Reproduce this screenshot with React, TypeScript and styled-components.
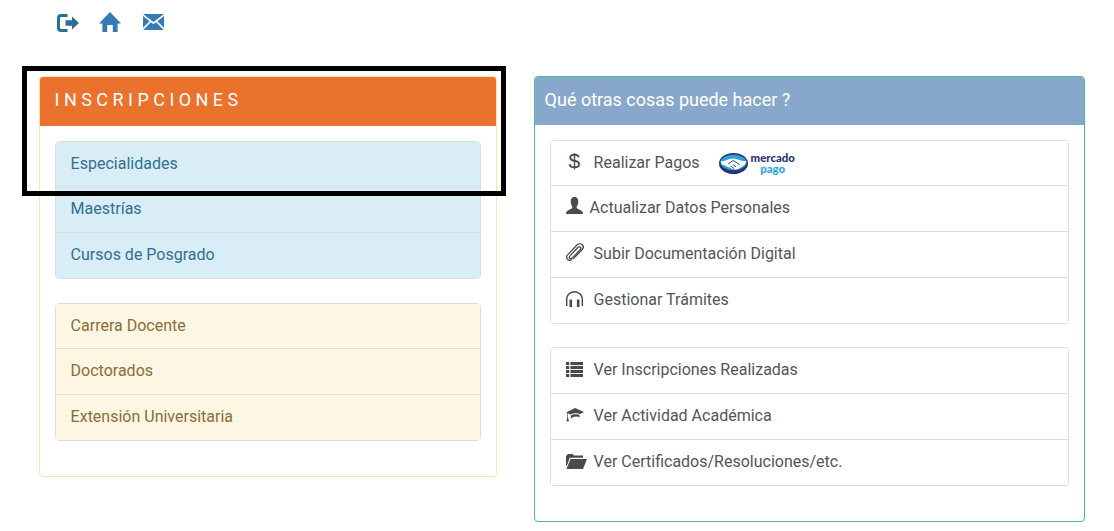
import React from "react";
import styled, { createGlobalStyle } from "styled-components";

const Global = createGlobalStyle`
  html, body { margin: 0; padding: 0; background: #fff; }
  body { font-family: Roboto, "Liberation Sans", sans-serif; font-size: 16px; line-height: 22.857px; color: #333; }
  * { box-sizing: border-box; }
`;

const Page = styled.div`
  position: relative;
  width: 1114px;
  height: 531px;
  overflow: hidden;
`;
const Toolbar = styled.nav`
  display: flex;
  align-items: flex-start;
  height: 76px;
  padding: 12px 0 0 57px;
`;
const ToolLink = styled.a<{ $w: number; $top?: number; $color?: string }>`
  display: block;
  width: ${(p) => p.$w}px;
  margin-top: ${(p) => p.$top ?? 0}px;
  color: ${(p) => p.$color ?? "#337ab7"};
  line-height: 0;
`;
const Columns = styled.div`
  display: flex;
  align-items: flex-start;
  padding-left: 39px;
  gap: 37px;
`;
const Panel = styled.section<{ $w: number; $h: number; $border: string }>`
  width: ${(p) => p.$w}px;
  height: ${(p) => p.$h}px;
  border: 1px solid ${(p) => p.$border};
  border-radius: 4px;
  overflow: hidden;
`;
const Heading = styled.h2<{ $bg: string; $spacing?: number }>`
  margin: 0;
  height: ${(p) => (p.$spacing ? 49 : 48)}px;
  padding: 0 10px 0 ${(p) => (p.$spacing ? 14.6 : 9.6)}px;
  background: ${(p) => p.$bg};
  color: #fff;
  font-size: 18px;
  font-weight: 400;
  line-height: 46px;
  letter-spacing: ${(p) => p.$spacing ?? 0}px;
`;
const Body = styled.div<{ $gap: number }>`
  display: flex;
  flex-direction: column;
  gap: ${(p) => p.$gap}px;
  padding: 14.6px 15px 0;
`;
const List = styled.ul`
  list-style: none;
  margin: 0;
  padding: 0;
  border: 1px solid #ddd;
  border-radius: 4px;
`;
const Item = styled.li<{ $bg: string; $color: string }>`
  display: flex;
  align-items: center;
  height: 45.857px;
  padding: 0 14.6px;
  background: ${(p) => p.$bg};
  color: ${(p) => p.$color};
  border-top: 1px solid #ddd;
  white-space: nowrap;
  &:first-child { border-top: 0; height: 44.857px; }
`;
const IconSlot = styled.span<{ $w: number; $pad?: number; $lift?: number }>`
  display: flex;
  align-items: center;
  flex: none;
  width: ${(p) => p.$w}px;
  padding-left: ${(p) => p.$pad ?? 0}px;
  margin-bottom: ${(p) => p.$lift ?? 0}px;
  color: #4a4a4a;
  line-height: 0;
`;
const Dollar = styled.span`
  font-family: "Liberation Sans", sans-serif;
  font-size: 21px;
  line-height: 20px;
  color: #444;
`;
const Logo = styled.span`
  display: flex;
  align-items: center;
  margin-left: 19px;
  gap: 3px;
`;
const LogoWords = styled.span`
  display: flex;
  flex-direction: column;
  align-items: center;
  font-family: Lato, "Liberation Sans", sans-serif;
  font-weight: 900;
  font-size: 11.4px;
  line-height: 11px;
  color: #2d3277;
`;
const LogoPago = styled.span`
  color: #2aa4e0;
`;
const Highlight = styled.div`
  position: absolute;
  left: 22px;
  top: 66px;
  width: 484px;
  height: 130px;
  border: 5px solid #000;
  pointer-events: none;
`;

const Svg = ({ w, h, vb, d }: { w: number; h: number; vb: string; d: string }) => (
  <svg width={w} height={h} viewBox={vb} fill="currentColor" fillRule="evenodd">
    <path d={d} />
  </svg>
);

const LogOut = () => (
  <Svg w={22} h={18} vb="0 0 22 18" d="M4 0H10.5V3H4.5C3.5 3 3 3.5 3 4.5V13.5C3 14.5 3.5 15 4.5 15H10.5V18H4C1.5 18 0 16.5 0 14V4C0 1.5 1.5 0 4 0ZM8.5 6.2H15V2.5L22 9L15 15.5V11.8H8.5Z" />
);
const Home = () => (
  <Svg w={22} h={20} vb="0 0 22 20" d="M11 0L22 11.5H18.6V20H13.8V13H8.2V20H3.4V11.5H0Z" />
);
const Mail = () => (
  <Svg w={21} h={16} vb="0 0 21 16" d="M0 0H21L10.5 8ZM0 2L6.6 7.2L0 13.8ZM21 2V13.8L14.4 7.2ZM7.9 8.3L10.5 10.3L13.1 8.3L20.8 16H.2Z" />
);
const UserIcon = () => (
  <Svg w={17} h={17} vb="0 0 17 17" d="M8.5 0C11 0 12.3 2 12.3 4.6C12.3 6.8 11.4 8.8 10.6 9.8C10.6 11 11 11.6 12.5 12.2C15 13.2 17 14 17 17H0C0 14 2 13.2 4.5 12.2C6 11.6 6.4 11 6.4 9.8C5.6 8.8 4.7 6.8 4.7 4.6C4.7 2 6 0 8.5 0Z" />
);
const Clip = () => (
  <svg width="18" height="18" viewBox="0 0 18 18" fill="none" stroke="currentColor" strokeWidth="1.3" strokeLinecap="round">
    <path d="M5.5 16.8C3.8 17.8 1.6 17 .9 15.2C.4 14 .8 12.6 1.8 11.6L10.5 2.5C12.3.6 14.8.3 16.3 1.7C17.8 3.2 17.4 5.5 15.6 7.3L7.4 15.6" />
    <path d="M4.2 12.6L11.6 4.8C12.6 3.7 13.8 3.5 14.5 4.2C15.2 4.9 15 6 14 7L6.5 14.8C5.4 15.8 4.2 15.9 3.6 15.2C3 14.6 3.2 13.6 4.2 12.6Z" />
  </svg>
);
const Headphones = () => (
  <svg width="17" height="16" viewBox="0 0 17 16" fill="currentColor">
    <path d="M8.5 0C3.8 0 0 3.6 0 8.3V15H1.4V8.3C1.4 4.4 4.6 1.4 8.5 1.4S15.6 4.4 15.6 8.3V15H17V8.3C17 3.6 13.2 0 8.5 0Z" />
    <rect x="3.5" y="8.5" width="2.6" height="7.5" rx=".5" />
    <rect x="10.9" y="8.5" width="2.6" height="7.5" rx=".5" />
  </svg>
);
const ListIcon = () => (
  <Svg w={17} h={15} vb="0 0 17 15" d="M0 0H3.2V3H0ZM4.4 0H17V3H4.4ZM0 4H3.2V7H0ZM4.4 4H17V7H4.4ZM0 8H3.2V11H0ZM4.4 8H17V11H4.4ZM0 12H3.2V15H0ZM4.4 12H17V15H4.4Z" />
);
const Grad = () => (
  <Svg w={18} h={14} vb="0 0 18 14" d="M9 0L18 4L13.8 6.2C12 4.8 7 4.8 4.5 6.6L2 5.4V9.5L3 13.5H.5L1.3 9.5V5L0 4.4ZM4.8 7.4C7 5.8 11.6 5.8 13.6 7.2V9.5C11 8 7 8.4 4.8 10.8Z" />
);
const Folder = () => (
  <Svg w={21} h={15} vb="0 0 21 15" d="M0 2L2 0H6.5L8 1.5H17V3.8H3.8L0.8 12L0 11.5ZM4.5 5H21L17 15H.5Z" />
);
const MpMark = () => (
  <svg width="29" height="21" viewBox="0 0 29 21">
    <ellipse cx="14.5" cy="10.5" rx="14.5" ry="10.5" fill="#2d3277" />
    <ellipse cx="14.5" cy="9.5" rx="13" ry="7.8" fill="#2aa4e0" />
    <path d="M1.5 8C6 9 8 6 14 5.5C20 6 23 9 27.5 8L26 11.5C24 12.5 21 16 16.5 16.5C12 16 8 13 3 11.5Z" fill="#fff" />
    <path d="M9 11L14 7.5L20.5 11.5M11.5 13L15 15.5M14 11.5L17 14" stroke="#2d3277" strokeWidth=".9" fill="none" />
  </svg>
);

const info = { $bg: "#d9edf7", $color: "#31708f" };
const warn = { $bg: "#fdf6e3", $color: "#8a6d3b" };
const plain = { $bg: "#fff", $color: "#555" };

export default function App() {
  return (
    <Page>
      <Global />
      <Toolbar>
        <ToolLink $w={42} $top={2} $color="#2a6f95"><LogOut /></ToolLink>
        <ToolLink $w={44}><Home /></ToolLink>
        <ToolLink $w={22} $top={2}><Mail /></ToolLink>
      </Toolbar>
      <Columns>
        <Panel $w={458} $h={401} $border="#fde3b0">
          <Heading $bg="#eb722d" $spacing={4.45}>INSCRIPCIONES</Heading>
          <Body $gap={23.4}>
            <List>
              <Item {...info}>Especialidades</Item>
              <Item {...info}>Maestrías</Item>
              <Item {...info}>Cursos de Posgrado</Item>
            </List>
            <List>
              <Item {...warn}>Carrera Docente</Item>
              <Item {...warn}>Doctorados</Item>
              <Item {...warn}>Extensión Universitaria</Item>
            </List>
          </Body>
        </Panel>
        <Panel $w={551} $h={446} $border="#4db8a6">
          <Heading $bg="#88a8cb">Qué otras cosas puede hacer ?</Heading>
          <Body $gap={23.2}>
            <List>
              <Item {...plain}>
                <IconSlot $w={28} $pad={3} $lift={5}><Dollar>$</Dollar></IconSlot>
                Realizar Pagos
                <Logo>
                  <MpMark />
                  <LogoWords>mercado<LogoPago>pago</LogoPago></LogoWords>
                </Logo>
              </Item>
              <Item {...plain}><IconSlot $w={24} $lift={6}><UserIcon /></IconSlot>Actualizar Datos Personales</Item>
              <Item {...plain}><IconSlot $w={28} $lift={6}><Clip /></IconSlot>Subir Documentación Digital</Item>
              <Item {...plain}><IconSlot $w={28} $lift={4}><Headphones /></IconSlot>Gestionar Trámites</Item>
            </List>
            <List>
              <Item {...plain}><IconSlot $w={28} $lift={2}><ListIcon /></IconSlot>Ver Inscripciones Realizadas</Item>
              <Item {...plain}><IconSlot $w={28} $lift={2}><Grad /></IconSlot>Ver Actividad Académica</Item>
              <Item {...plain}><IconSlot $w={28} $lift={2}><Folder /></IconSlot>Ver Certificados/Resoluciones/etc.</Item>
            </List>
          </Body>
        </Panel>
      </Columns>
      <Highlight />
    </Page>
  );
}
